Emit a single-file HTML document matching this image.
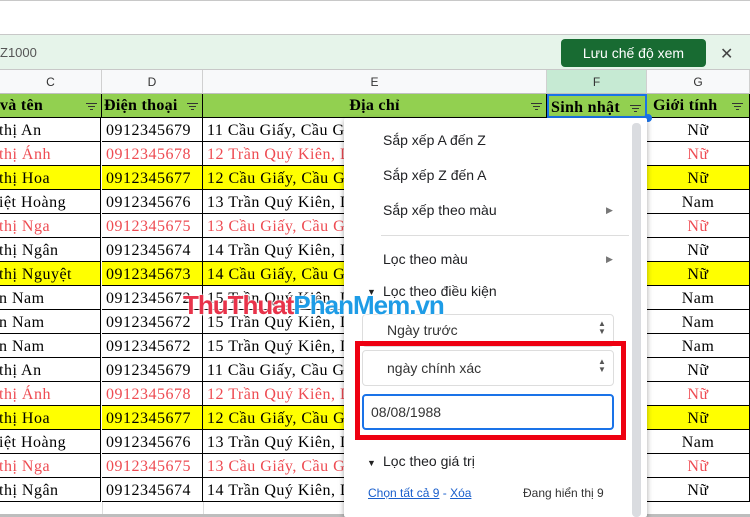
<!DOCTYPE html>
<html><head><meta charset="utf-8"><style>
*{margin:0;padding:0;box-sizing:border-box}
body{width:750px;height:517px;overflow:hidden;background:#fff;position:relative;font-family:"Liberation Sans",sans-serif}
.a{position:absolute}
.cell{position:absolute;height:24px;line-height:26px;font-family:"Liberation Serif",serif;font-size:16px;letter-spacing:0.5px;white-space:nowrap;overflow:hidden;border-bottom:1.5px solid #000;border-right:1.5px solid #000;padding-left:4px}
.red{color:#ee4b52}
.yel{background:#ffff00}
.hdr{position:absolute;top:70px;height:24px;line-height:24px;text-align:center;font-size:12px;color:#333;background:#f8f9fa;border-right:1px solid #d0d0d0;border-bottom:1px solid #c0c0c0}
.th{position:absolute;top:94px;height:24px;line-height:24px;font-family:"Liberation Serif",serif;font-weight:bold;font-size:16px;letter-spacing:0.3px;background:#92d050;border-right:1.5px solid #000;border-bottom:1.5px solid #000;white-space:nowrap;overflow:hidden}
.fi{position:absolute;right:4px;top:9px;width:11px}
.fi i{display:block;height:1px;background:#333;margin:0 auto 2px}
.mi{position:absolute;left:383px;font-size:14px;color:#202124}
</style></head><body>
<div class="a" style="left:0;top:0;width:750px;height:35px;background:#fff;border-bottom:1px solid #c8c8c8;border-top:1px solid #c8c8c8"></div>
<div class="a" style="left:0;top:35px;width:750px;height:35px;background:#e6f4ea;border-bottom:1px solid #c8c8c8"></div>
<div class="a" style="left:0;top:45px;font-size:13px;color:#555">Z1000</div>
<div class="a" style="left:561px;top:39px;width:145px;height:28px;background:#186b32;border-radius:4px;color:#fff;font-size:14px;text-align:center;line-height:28px">Lưu chế độ xem</div>
<div class="a" style="left:720px;top:44px;font-size:16px;color:#444">✕</div>

<div class="hdr" style="left:0;width:102px">C</div>
<div class="hdr" style="left:102px;width:101px">D</div>
<div class="hdr" style="left:203px;width:344px">E</div>
<div class="hdr" style="left:547px;width:100px;background:#c6ead3">F</div>
<div class="hdr" style="left:647px;width:103px">G</div>

<div class="th" style="left:0;width:102px">và tên<span class="fi"><i style="width:11px"></i><i style="width:7px"></i><i style="width:3px"></i></span></div>
<div class="th" style="left:102px;width:101px;padding-left:2px">Điện thoại<span class="fi"><i style="width:11px"></i><i style="width:7px"></i><i style="width:3px"></i></span></div>
<div class="th" style="left:203px;width:344px;text-align:center">Địa chỉ<span class="fi"><i style="width:11px"></i><i style="width:7px"></i><i style="width:3px"></i></span></div>
<div class="th" style="left:547px;width:100px;padding-left:2px;border:2px solid #1a73e8">Sinh nhật<span class="fi"><i style="width:11px"></i><i style="width:7px"></i><i style="width:3px"></i></span></div>
<div class="th" style="left:647px;width:103px;padding-left:6px">Giới tính<span class="fi" style="right:6px"><i style="width:11px"></i><i style="width:7px"></i><i style="width:3px"></i></span></div>

<div id="rows"></div>
<div class="a" style="left:0;top:502px;width:750px;height:13px;background:#fff"></div>
<div class="a" style="left:102px;top:502px;width:1px;height:13px;background:#ddd"></div>
<div class="a" style="left:203px;top:502px;width:1px;height:13px;background:#ddd"></div>
<div class="a" style="left:0;top:514px;width:750px;height:3px;background:#bdbdbd"></div>

<div class="a" style="left:644px;top:114px;width:8px;height:8px;border-radius:50%;background:#1a73e8"></div>

<div class="a" style="left:344px;top:118px;width:303px;height:399px;background:#fff;box-shadow:0 2px 6px rgba(0,0,0,.35);border-radius:2px"></div>
<div class="a" style="left:632px;top:123px;width:9px;height:394px;background:#dadce0;border-radius:4px"></div>
<div class="mi" style="top:132px">Sắp xếp A đến Z</div>
<div class="mi" style="top:167px">Sắp xếp Z đến A</div>
<div class="mi" style="top:202px">Sắp xếp theo màu</div>
<div class="a" style="left:606px;top:205px;font-size:9px;color:#777">▶</div>
<div class="a" style="left:381px;top:235px;width:248px;height:1px;background:#ddd"></div>
<div class="mi" style="top:251px">Lọc theo màu</div>
<div class="a" style="left:606px;top:254px;font-size:9px;color:#777">▶</div>
<div class="a" style="left:367px;top:287px;font-size:9px;color:#222">▼</div>
<div class="mi" style="top:283px">Lọc theo điều kiện</div>
<div class="a" style="left:362px;top:314px;width:252px;height:33px;border:1px solid #ddd;border-radius:4px"></div>
<div class="a" style="left:387px;top:322px;font-size:14px;color:#333">Ngày trước</div>
<div class="a" style="left:598px;top:320px;font-size:8px;line-height:8px;color:#555">▲<br>▼</div>
<div class="a" style="left:355px;top:341px;width:271px;height:99px;border:5px solid #ee0011"></div>
<div class="a" style="left:362px;top:350px;width:252px;height:36px;border:1px solid #ddd;border-radius:4px;background:#fff"></div>
<div class="a" style="left:387px;top:360px;font-size:14px;color:#333">ngày chính xác</div>
<div class="a" style="left:598px;top:358px;font-size:8px;line-height:8px;color:#555">▲<br>▼</div>
<div class="a" style="left:362px;top:394px;width:252px;height:36px;border:2px solid #1a73e8;border-radius:4px"></div>
<div class="a" style="left:371px;top:404px;font-size:14px;color:#333">08/08/1988</div>
<div class="a" style="left:367px;top:458px;font-size:9px;color:#222">▼</div>
<div class="mi" style="top:453px">Lọc theo giá trị</div>
<div class="a" style="left:368px;top:486px;font-size:12px;color:#1a5fcc"><u>Chọn tất cả 9</u> - <u>Xóa</u></div>
<div class="a" style="left:523px;top:486px;font-size:12px;color:#333">Đang hiển thị 9</div>

<div class="a" style="left:183px;top:290px;font-size:26px;font-weight:bold;letter-spacing:-1px;font-family:'Liberation Sans',sans-serif;text-shadow:0 0 2px #fff,0 0 2px #fff,1px 1px 2px #fff"><span style="color:#e8334a">ThuThuat</span><span style="color:#1e9ce6">PhanMem.vn</span></div>

<script>
const R=[
["thị An","0912345679","11 Cầu Giấy, Cầu Giấy","Nữ",""],
["thị Ánh","0912345678","12 Trần Quý Kiên, D","Nữ","r"],
["thị Hoa","0912345677","12 Cầu Giấy, Cầu Giấy","Nữ","y"],
["iệt Hoàng","0912345676","13 Trần Quý Kiên, D","Nam",""],
["thị Nga","0912345675","13 Cầu Giấy, Cầu Giấy","Nữ","r"],
["thị Ngân","0912345674","14 Trần Quý Kiên, D","Nữ",""],
["thị Nguyệt","0912345673","14 Cầu Giấy, Cầu Giấy","Nữ","y"],
["n Nam","0912345672","15 Trần Quý Kiên, D","Nam",""],
["n Nam","0912345672","15 Trần Quý Kiên, D","Nam",""],
["n Nam","0912345672","15 Trần Quý Kiên, D","Nam",""],
["thị An","0912345679","11 Cầu Giấy, Cầu Giấy","Nữ",""],
["thị Ánh","0912345678","12 Trần Quý Kiên, D","Nữ","r"],
["thị Hoa","0912345677","12 Cầu Giấy, Cầu Giấy","Nữ","y"],
["iệt Hoàng","0912345676","13 Trần Quý Kiên, D","Nam",""],
["thị Nga","0912345675","13 Cầu Giấy, Cầu Giấy","Nữ","r"],
["thị Ngân","0912345674","14 Trần Quý Kiên, D","Nữ",""]];
let h="";
R.forEach((r,i)=>{const t=118+i*24;const c=(r[4]=="r"?" red":"")+(r[4]=="y"?" yel":"");
h+=`<div class="cell${c}" style="left:0;top:${t}px;width:102px;padding-left:0;margin-left:-1px">${r[0]}</div>`;
h+=`<div class="cell${c}" style="left:102px;top:${t}px;width:101px">${r[1]}</div>`;
h+=`<div class="cell${c}" style="left:203px;top:${t}px;width:344px">${r[2]}</div>`;
h+=`<div class="cell${c}" style="left:547px;top:${t}px;width:100px"></div>`;
h+=`<div class="cell${c}" style="left:647px;top:${t}px;width:103px;text-align:center;padding-left:0">${r[3]}</div>`;});
document.getElementById("rows").innerHTML=h;
</script>
</body></html>
